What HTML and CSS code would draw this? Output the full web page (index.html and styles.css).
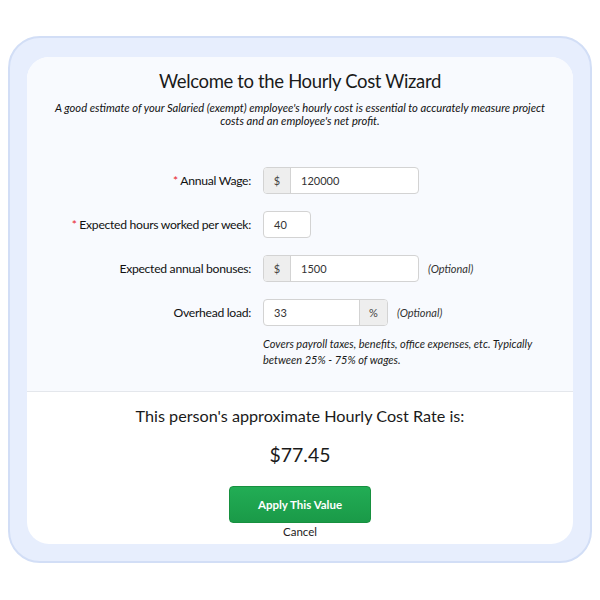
FILE: index.html
```html
<!DOCTYPE html>
<html>
<head>
<meta charset="utf-8">
<link rel="stylesheet" href="styles.css">
</head>
<body>
<div class="frame">
  <div class="card">
    <section class="top">
      <h1 class="title">Welcome to the Hourly Cost Wizard</h1>
      <p class="intro">A good estimate of your Salaried (exempt) employee's hourly cost is essential to accurately measure project costs and an employee's net profit.</p>
      <div class="form">
        <label class="label"><span class="req">*</span> Annual Wage:</label>
        <div class="field">
          <div class="group w156"><span class="addon addon-left">$</span><span class="input">120000</span></div>
        </div>

        <label class="label"><span class="req">*</span> Expected hours worked per week:</label>
        <div class="field">
          <div class="group w48"><span class="input">40</span></div>
        </div>

        <label class="label">Expected annual bonuses:</label>
        <div class="field">
          <div class="group w156"><span class="addon addon-left">$</span><span class="input">1500</span></div>
          <span class="opt">(Optional)</span>
        </div>

        <label class="label">Overhead load:</label>
        <div class="field">
          <div class="group w125"><span class="input">33</span><span class="addon addon-right">%</span></div>
          <span class="opt">(Optional)</span>
        </div>

        <div></div>
        <p class="help">Covers payroll taxes, benefits, office expenses, etc. Typically between 25% - 75% of wages.</p>
      </div>
    </section>
    <section class="bottom">
      <h2 class="rate-label">This person's approximate Hourly Cost Rate is:</h2>
      <div class="rate">$77.45</div>
      <button class="apply">Apply This Value</button>
      <a class="cancel">Cancel</a>
    </section>
  </div>
</div>
</body>
</html>
```

FILE: styles.css
```css
* { box-sizing: border-box; }
html, body { margin: 0; padding: 0; background: #fff; }
body {
  font-family: Lato, "Liberation Sans", sans-serif;
  color: #222;
  width: 600px;
  height: 600px;
  padding-top: 36px;
  padding-left: 8px;
}
.frame {
  width: 584px;
  height: 527px;
  background: #e7eefd;
  border: 2px solid #d2def6;
  border-radius: 32px;
  padding: 19px 17px 17px 17px;
}
.card {
  width: 546px;
  height: 487px;
  border-radius: 22px;
  overflow: hidden;
  background: #fff;
  display: flex;
  flex-direction: column;
}
.top {
  height: 335px;
  background: #f8fafe;
  border-bottom: 1px solid #e4e7ec;
  padding-top: 12px;
}
.title {
  margin: 0;
  font-weight: 400;
  font-size: 18.5px;
  letter-spacing: -0.35px;
  line-height: 24px;
  text-align: center;
  color: #1a1a1a;
}
.intro {
  margin: 8px 22px 0;
  font-style: italic;
  font-size: 11.2px;
  line-height: 13px;
  text-align: center;
  color: #111;
}
.form {
  display: grid;
  grid-template-columns: 224px 1fr;
  column-gap: 12px;
  row-gap: 17px;
  margin-top: 40px;
  align-items: center;
}
.label {
  text-align: right;
  font-size: 12.2px;
  letter-spacing: -0.3px;
  color: #111;
}
.req { color: #e8232a; }
.field {
  display: flex;
  align-items: center;
  gap: 9px;
  height: 27px;
}
.group {
  display: flex;
  height: 27px;
  border: 1px solid #d3d3d3;
  border-radius: 4px;
  background: #fff;
  overflow: hidden;
  font-size: 11px;
}
.w156 { width: 156px; }
.w48 { width: 48px; }
.w125 { width: 125px; }
.addon {
  width: 27px;
  flex: none;
  background: #eeeeee;
  display: flex;
  align-items: center;
  justify-content: center;
  color: #444;
}
.addon-left { border-right: 1px solid #d3d3d3; }
.addon-right { width: 28px; border-left: 1px solid #d3d3d3; }
.input {
  flex: 1;
  display: flex;
  align-items: center;
  padding-left: 10px;
  color: #333;
}
.opt {
  font-style: italic;
  font-size: 11px;
  color: #333;
}
.help {
  margin: -7px 0 0;
  font-style: italic;
  font-size: 11px;
  line-height: 16px;
  color: #1a1a1a;
  padding-right: 10px;
}
.bottom {
  flex: 1;
  display: flex;
  flex-direction: column;
  align-items: center;
}
.rate-label {
  margin: 13px 0 0;
  font-weight: 400;
  font-size: 16.2px;
  line-height: 22px;
  color: #1a1a1a;
}
.rate {
  margin-top: 15px;
  font-size: 19.4px;
  line-height: 26px;
  color: #1a1a1a;
}
.apply {
  margin-top: 18px;
  width: 142px;
  height: 37px;
  border: 1px solid #17903f;
  border-radius: 4px;
  background: linear-gradient(#22ad55, #1a9a48);
  color: #fff;
  font-family: Lato, "Liberation Sans", sans-serif;
  font-weight: 700;
  font-size: 11.5px;
}
.cancel {
  margin-top: 1px;
  font-size: 11.5px;
  line-height: 16px;
  color: #222;
}
```
